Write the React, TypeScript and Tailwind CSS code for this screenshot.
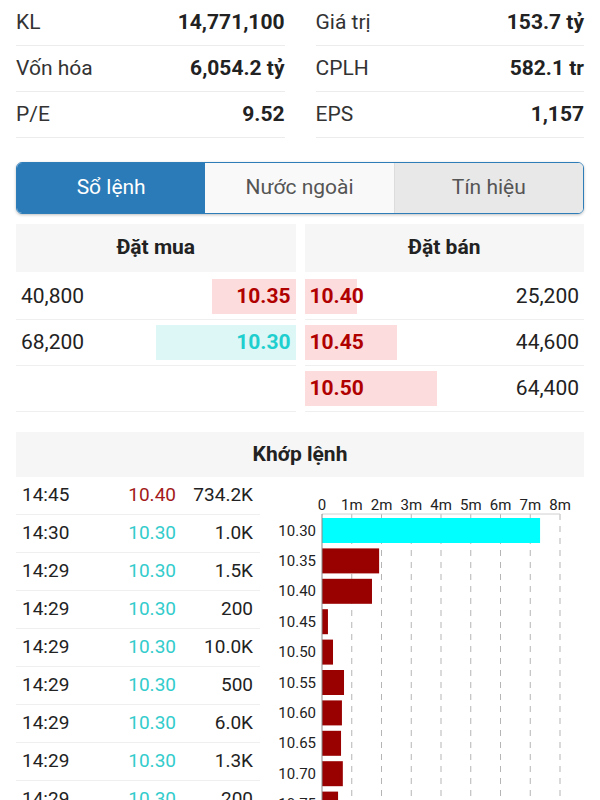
import React from 'react';

interface Stat {
  label: string;
  value: string;
}

interface BookRow {
  qty: string;
  price: string;
  bar: number;
}

interface Trade {
  time: string;
  price: string;
  vol: string;
  up: boolean;
}

const stats: Stat[][] = [
  [{ label: 'KL', value: '14,771,100' }, { label: 'Giá trị', value: '153.7 tỷ' }],
  [{ label: 'Vốn hóa', value: '6,054.2 tỷ' }, { label: 'CPLH', value: '582.1 tr' }],
  [{ label: 'P/E', value: '9.52' }, { label: 'EPS', value: '1,157' }],
];

const bids: (BookRow | null)[] = [
  { qty: '40,800', price: '10.35', bar: 84 },
  { qty: '68,200', price: '10.30', bar: 140 },
  null,
];

const asks: BookRow[] = [
  { qty: '25,200', price: '10.40', bar: 52 },
  { qty: '44,600', price: '10.45', bar: 92 },
  { qty: '64,400', price: '10.50', bar: 132 },
];

const trades: Trade[] = [
  { time: '14:45', price: '10.40', vol: '734.2K', up: false },
  { time: '14:30', price: '10.30', vol: '1.0K', up: true },
  { time: '14:29', price: '10.30', vol: '1.5K', up: true },
  { time: '14:29', price: '10.30', vol: '200', up: true },
  { time: '14:29', price: '10.30', vol: '10.0K', up: true },
  { time: '14:29', price: '10.30', vol: '500', up: true },
  { time: '14:29', price: '10.30', vol: '6.0K', up: true },
  { time: '14:29', price: '10.30', vol: '1.3K', up: true },
  { time: '14:29', price: '10.30', vol: '200', up: true },
  { time: '14:29', price: '10.30', vol: '2.0K', up: true },
];

// volume by price, in millions
const volumes = [
  { price: '10.30', v: 7.33, buy: true },
  { price: '10.35', v: 1.92, buy: false },
  { price: '10.40', v: 1.68, buy: false },
  { price: '10.45', v: 0.2, buy: false },
  { price: '10.50', v: 0.37, buy: false },
  { price: '10.55', v: 0.74, buy: false },
  { price: '10.60', v: 0.67, buy: false },
  { price: '10.65', v: 0.64, buy: false },
  { price: '10.70', v: 0.7, buy: false },
  { price: '10.75', v: 0.54, buy: false },
];

const VolumeChart: React.FC = () => {
  const x0 = 62;
  const step = 29.75;
  const axisY = 24;
  const barTop = 28;
  const barH = 25;
  const gap = 30.4;
  const ticks = [0, 1, 2, 3, 4, 5, 6, 7, 8];

  return (
    <svg width="325" height="330" className="block" style={{ fontFamily: 'Roboto, sans-serif' }}>
      {ticks.map((t) => (
        <g key={t}>
          <text x={x0 + t * step} y={20} fontSize="15" fill="#222" textAnchor="middle">
            {t === 0 ? '0' : `${t}m`}
          </text>
          {t > 0 && (
            <line
              x1={x0 + t * step}
              x2={x0 + t * step}
              y1={axisY}
              y2={330}
              stroke="#b5b5b5"
              strokeWidth="1"
              strokeDasharray="6 6"
            />
          )}
        </g>
      ))}
      <line x1={x0} x2={x0 + 8 * step} y1={axisY} y2={axisY} stroke="#d0d0d0" strokeWidth="1" />
      {volumes.map((d, i) => {
        const y = barTop + i * gap;
        return (
          <g key={d.price}>
            <rect x={x0} y={y} width={d.v * step} height={barH} fill={d.buy ? '#00ffff' : '#990000'} />
            <text x={56} y={y + barH / 2 + 5} fontSize="15" fill="#222" textAnchor="end">
              {d.price}
            </text>
          </g>
        );
      })}
      <line x1={x0} x2={x0} y1={axisY} y2={330} stroke="#888" strokeWidth="1" />
    </svg>
  );
};

const App: React.FC = () => {
  return (
    <div
      className="w-[600px] h-[800px] overflow-hidden bg-white px-4 text-[#222]"
      style={{ fontFamily: 'Roboto, "Noto Sans", sans-serif' }}
    >
      {/* Stats */}
      <div className="flex flex-col">
        {stats.map((row, i) => (
          <div key={i} className="grid grid-cols-2 gap-x-[31px]">
            {row.map((s) => (
              <div
                key={s.label}
                className="flex h-[46px] items-center justify-between border-b border-[#ececec] text-[21px]"
              >
                <span className="text-[#333]">{s.label}</span>
                <span className="font-bold text-[#222]">{s.value}</span>
              </div>
            ))}
          </div>
        ))}
      </div>

      {/* Tabs */}
      <div className="mt-[24px] flex h-[52px] overflow-hidden rounded-md border-[1.5px] border-[#2f7db8] text-[21px] shadow-[0_1px_3px_rgba(0,0,0,0.25)]">
        <button className="flex flex-1 items-center justify-center bg-[#2a7bb8] text-white">Sổ lệnh</button>
        <button className="flex flex-1 items-center justify-center border-r border-[#dcdcdc] bg-[#f9f9f9] text-[#555]">
          Nước ngoài
        </button>
        <button className="flex flex-1 items-center justify-center bg-[#e8e8e8] text-[#555]">Tín hiệu</button>
      </div>

      {/* Order book */}
      <div className="mt-[10px] grid grid-cols-2 gap-x-[9px]">
        <div>
          <div className="flex h-[48px] items-center justify-center bg-[#f6f6f6] text-[21px] font-bold">Đặt mua</div>
          <div className="mt-[2px]">
            {bids.map((b, i) => (
              <div key={i} className="relative flex h-[46px] items-center justify-between border-b border-[#efefef] text-[21px]">
                {b && (
                  <>
                    <div
                      className={`absolute right-0 top-[5px] h-[35px] ${b.price === '10.30' ? 'bg-[#dcf7f5]' : 'bg-[#fcdcdc]'}`}
                      style={{ width: b.bar }}
                    />
                    <span className="relative pl-[5px]">{b.qty}</span>
                    <span
                      className={`relative pr-[5px] font-bold ${b.price === '10.30' ? 'text-[#1fcfcf]' : 'text-[#b00000]'}`}
                    >
                      {b.price}
                    </span>
                  </>
                )}
              </div>
            ))}
          </div>
        </div>
        <div>
          <div className="flex h-[48px] items-center justify-center bg-[#f6f6f6] text-[21px] font-bold">Đặt bán</div>
          <div className="mt-[2px]">
            {asks.map((a) => (
              <div key={a.price} className="relative flex h-[46px] items-center justify-between border-b border-[#efefef] text-[21px]">
                <div className="absolute left-0 top-[5px] h-[35px] bg-[#fcdcdc]" style={{ width: a.bar }} />
                <span className="relative pl-[5px] font-bold text-[#b00000]">{a.price}</span>
                <span className="relative pr-[5px]">{a.qty}</span>
              </div>
            ))}
          </div>
        </div>
      </div>

      {/* Matched orders */}
      <div className="mt-[20px] flex h-[45px] items-center justify-center bg-[#f6f6f6] text-[21px] font-bold">Khớp lệnh</div>
      <div className="flex">
        <div className="w-[244px] shrink-0">
          {trades.map((t, i) => (
            <div key={i} className="flex h-[38px] items-center border-b border-[#efefef] text-[19px]">
              <span className="flex-1 pl-[6px]">{t.time}</span>
              <span className={`w-[60px] text-right ${t.up ? 'text-[#33cccc]' : 'text-[#a31a1a]'}`}>{t.price}</span>
              <span className="w-[84px] pr-[7px] text-right">{t.vol}</span>
            </div>
          ))}
        </div>
        <div className="pt-[13px]">
          <VolumeChart />
        </div>
      </div>
    </div>
  );
};

export default App;
